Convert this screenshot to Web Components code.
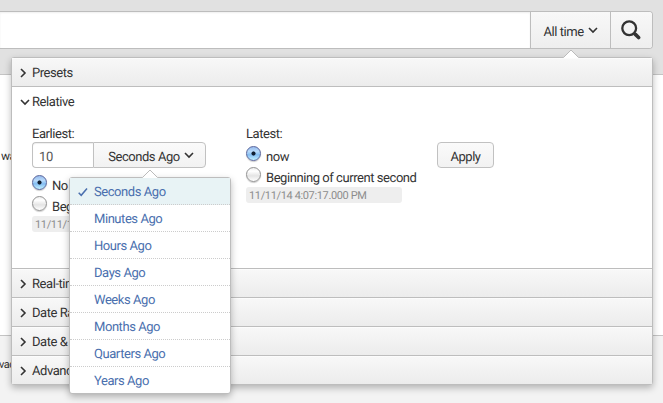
<!DOCTYPE html>
<html lang="en">
<head>
<meta charset="utf-8">
<title>Time range picker</title>
<style>
html,body{margin:0;height:100%;overflow:hidden}
body{font:13px/20px Roboto,"Liberation Sans",sans-serif;letter-spacing:-.44px;text-rendering:geometricPrecision;color:#333;background:#fff}
</style>
</head>
<body>
<search-page></search-page>
<script>
const define = (name, html) => customElements.define(name, class extends HTMLElement {
  constructor() {
    super();
    const t = document.createElement('template');
    t.innerHTML = html;
    this.attachShadow({mode: 'open'}).append(t.content.cloneNode(true));
  }
});

define('caret-icon', `<style>:host{display:inline-block;width:10px;height:8px}:host([right]){transform:rotate(-90deg)}svg{display:block}</style>
<svg width="10" height="8" viewBox="0 0 10 8" fill="none" stroke="#333" stroke-width="1.6"><path d="M1 2l4 4L9 2"/></svg>`);

define('search-icon', `<style>:host{display:block;width:20px;height:20px}svg{display:block}</style>
<svg width="20" height="20" viewBox="0 0 20 20" fill="none" stroke="#333"><circle cx="8.2" cy="8.2" r="6.9" stroke-width="2.3"/><path d="M13 13l1.6 1.6" stroke-width="2.2"/><path d="M14.4 14.4l3.2 3.1" stroke-width="3.6" stroke-linecap="round"/></svg>`);

define('up-arrow', `<style>:host{display:block;position:absolute;width:16px;height:9px}svg{display:block}</style>
<svg width="16" height="9" viewBox="0 0 16 9"><path d="M.5 8.5L8 1l7.500 7.500V9H.5z" fill="#fff"/><path d="M.5 8.5L8 1l7.500 7.500" fill="none" stroke="#bbb"/></svg>`);

define('search-bar', `<style>
:host{display:flex;height:36px;margin-right:10px;border:1px solid #bdbdbd;border-left:0;border-radius:0 4px 4px 0;background:#fff;overflow:hidden}
.input{flex:1;box-shadow:inset 0 1px 2px #0001}
.seg{box-sizing:border-box;display:flex;align-items:center;justify-content:center;border-left:1px solid #bdbdbd;background:linear-gradient(#f8f8f8,#eee)}
.time{width:80px;gap:4px;padding-top:6px}.time caret-icon{margin-top:-6px}.go{width:42px;padding-right:2px;padding-bottom:1px}
</style><div class="input"></div><div class="seg time">All time<caret-icon></caret-icon></div><div class="seg go"><search-icon></search-icon></div>`);

define('fold-header', `<style>
:host{box-sizing:border-box;display:flex;align-items:center;gap:4px;height:28px;padding:3px 0 0 6px;background:linear-gradient(#f8f8f8,#ececec);box-shadow:inset 0 1px #fff8}
:host([open]){background:none;height:29px;box-shadow:none;padding-left:8px;gap:2px}
:host([line]){border-top:1px solid #bdbdbd;height:29px}
::slotted(caret-icon){margin-top:-2px}
</style><slot name="icon"></slot><slot></slot>`);

define('radio-option', `<style>
:host{display:flex;height:21px;gap:5px;white-space:nowrap}
i{box-sizing:border-box;width:15px;height:15px;border:1px solid #929292;border-radius:50%;background:linear-gradient(#eee,#fff 25%,#e4e4e4 60%,#fff);box-shadow:0 1px 1px #0003}
:host([checked]) i{border-color:#59659b;background:radial-gradient(circle,#101e30 0 1.7px,transparent 2.4px),linear-gradient(#98bced,#b8dafa 35%,#84bdf2 60%,#c3f1ff)}
span{padding-top:3px;line-height:18px}
</style><i></i><span><slot></slot></span>`);

define('push-button', `<style>
:host{box-sizing:border-box;display:flex;align-items:center;justify-content:center;gap:4px;height:26px;border:1px solid #c1c1c1;border-radius:4px;background:linear-gradient(#fafafa,#f2f2f2);padding-top:6px}
:host([joined]){border-radius:0 4px 4px 0;padding-left:3px}
::slotted(caret-icon){margin-top:-6px}
</style><slot></slot>`);

define('time-stamp', `<style>:host{display:block;box-sizing:border-box;width:156px;height:16px;padding-left:3px;border-radius:3px;background:#eee;color:#8c8c8c;font-size:11px;letter-spacing:-.36px;line-height:18px;white-space:nowrap}</style><slot></slot>`);

define('unit-option', `<style>
:host{box-sizing:border-box;display:flex;align-items:center;height:27px;padding:4px 0 0 8px;border-bottom:1px dotted #ccc;color:#4a6fae}
:host(:last-of-type){border-bottom:0;height:26px}
:host([selected]){background:#e8f3f5}
svg{width:10px;height:10px;margin:-3px 6px 0 0;visibility:hidden}
:host([selected]) svg{visibility:visible}
</style><svg viewBox="0 0 10 10" fill="none" stroke="#4a6fae" stroke-width="1.5"><path d="M.7 5.800l2.500 2.500L9 1.500"/></svg><slot></slot>`);

define('unit-menu', `<style>
:host{box-sizing:border-box;position:absolute;left:57px;top:119px;width:162px;height:217px;border:1px solid #bdbdbd;border-radius:3px;background:#fff;box-shadow:0 3px 7px #0004}
up-arrow{left:72px;top:-9px}
</style><slot></slot><up-arrow></up-arrow>`);

define('relative-form', `<style>
:host{display:flex;height:152px;padding-left:20px}
.early{width:214px;padding-top:10px}.late{width:191px;padding-top:10px}
.title{height:17px}
.pair{display:flex}.num{box-sizing:border-box;width:61px;height:26px;border:1px solid #c1c1c1;border-right:0;border-radius:4px 0 0 4px;padding:5px 0 0 6px;line-height:20px;letter-spacing:-.2px;color:#555;box-shadow:inset 0 1px 1px #0001}
.pair push-button{width:113px}
.early .radios{padding-top:7px}.late .radios{padding-top:4px}
time-stamp{margin-top:-1px}
.apply{width:57px;margin-top:27px}
</style>
<div class="early"><div class="title">Earliest:</div><div class="pair"><div class="num">10</div><push-button joined>Seconds Ago<caret-icon></caret-icon></push-button></div>
<div class="radios"><radio-option checked>No Snap-to</radio-option><radio-option>Beginning of second</radio-option></div><time-stamp>11/11/14 4:07:07.000 PM</time-stamp></div>
<div class="late"><div class="title">Latest:</div><div class="radios"><radio-option checked>now</radio-option><radio-option>Beginning of current second</radio-option></div><time-stamp>11/11/14 4:07:17.000 PM</time-stamp></div>
<push-button class="apply">Apply</push-button>`);

define('range-panel', `<style>
:host{box-sizing:border-box;position:absolute;left:11px;top:57px;width:642px;height:328px;border:1px solid #bdbdbd;border-radius:3px;background:#fff;box-shadow:0 3px 7px #0004}
.arrow{left:551px;top:-9px}
.body{height:153px}
</style><up-arrow class="arrow"></up-arrow>
<fold-header><caret-icon slot="icon" right></caret-icon>Presets</fold-header>
<fold-header open line><caret-icon slot="icon"></caret-icon>Relative</fold-header>
<relative-form class="body"></relative-form>
<fold-header line><caret-icon slot="icon" right></caret-icon>Real-time</fold-header>
<fold-header line><caret-icon slot="icon" right></caret-icon>Date Range</fold-header>
<fold-header line><caret-icon slot="icon" right></caret-icon>Date &amp; Time Range</fold-header>
<fold-header line><caret-icon slot="icon" right></caret-icon>Advanced</fold-header>
<unit-menu><unit-option selected>Seconds Ago</unit-option><unit-option>Minutes Ago</unit-option><unit-option>Hours Ago</unit-option><unit-option>Days Ago</unit-option><unit-option>Weeks Ago</unit-option><unit-option>Months Ago</unit-option><unit-option>Quarters Ago</unit-option><unit-option>Years Ago</unit-option></unit-menu>`);

define('search-page', `<style>
:host{display:flex;flex-direction:column;height:403px;position:relative;overflow:hidden}
header{height:63px;padding-top:11px;background:#e1e1e1;border-bottom:1px solid #c4c4c4}
main{height:260px;box-sizing:border-box;padding:71px 0 0 1px;white-space:nowrap;font-size:12px}
footer{flex:1;border-top:1px solid #c4c4c4;background:#f3f3f3;padding-top:19px;font-size:11px;white-space:nowrap;text-indent:-1px}
</style><header><search-bar></search-bar></header><main>wa</main><footer>vac</footer><range-panel></range-panel>`);
</script>
</body>
</html>
